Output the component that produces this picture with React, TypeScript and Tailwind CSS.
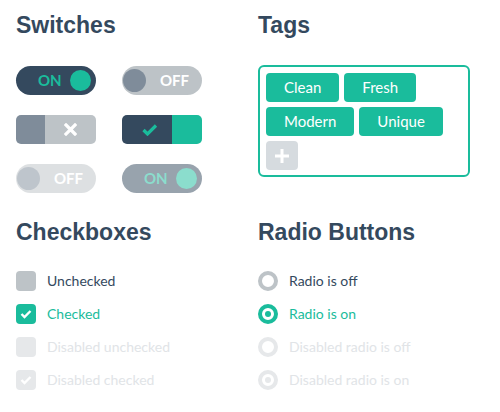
import React from 'react';

const heading = "font-['Liberation_Sans',Arial,sans-serif] font-bold text-[23px] leading-[26px] text-[#34495e]";

function SwitchOn({dim}: { dim?: boolean }) {
    return (
        <div className={`flex h-[29px] w-[80px] items-center rounded-full bg-[#34495e] pl-[22px] pr-[5px] ${dim ? 'opacity-50' : ''}`}>
            <span className="text-[15px] font-bold leading-none text-[#1abc9c]">ON</span>
            <span className="ml-auto block h-[21px] w-[21px] rounded-full bg-[#1abc9c]"/>
        </div>
    );
}

function SwitchOff({dim}: { dim?: boolean }) {
    return (
        <div className={`flex h-[29px] w-[80px] items-center gap-[14px] rounded-full bg-[#bdc3c7] pl-[1px] ${dim ? 'opacity-50' : ''}`}>
            <span className="block h-[23px] w-[23px] rounded-full bg-[#7f8c9a]"/>
            <span className="text-[15px] font-bold leading-none text-white">OFF</span>
        </div>
    );
}

function SwitchSquareOff() {
    return (
        <div className="flex h-[29px] w-[80px] overflow-hidden rounded-[5px]">
            <div className="w-[29px] bg-[#7f8c9a]"/>
            <div className="flex flex-1 items-center justify-center bg-[#bdc3c7]">
                <svg width="13" height="13" viewBox="0 0 13 13">
                    <path d="M2 2 L11 11 M11 2 L2 11" stroke="#fff" strokeWidth="3.2" strokeLinecap="square"/>
                </svg>
            </div>
        </div>
    );
}

function SwitchSquareOn() {
    return (
        <div className="flex h-[29px] w-[80px] overflow-hidden rounded-[5px]">
            <div className="flex w-[50px] items-center justify-center bg-[#34495e] pl-[6px]">
                <svg width="16" height="12" viewBox="0 0 16 12">
                    <path d="M1.5 6 L5.5 10 L14 1.5" fill="none" stroke="#1abc9c" strokeWidth="3.2"/>
                </svg>
            </div>
            <div className="flex-1 bg-[#1abc9c]"/>
        </div>
    );
}

function Check({color}: { color: string }) {
    return (
        <svg width="12" height="10" viewBox="0 0 12 10">
            <path d="M1.5 5 L4.5 8 L10.5 2" fill="none" stroke={color} strokeWidth="2.4"/>
        </svg>
    );
}

function Tag({label}: { label: string }) {
    return (
        <span className="flex h-[29px] items-center rounded-[4px] bg-[#1abc9c] px-[18px] text-[15px] leading-none text-white">
            {label}
        </span>
    );
}

export default function App() {
    const checkboxes = [
        {label: 'Unchecked', box: 'bg-[#bdc3c7]', text: 'text-[#34495e]', check: false},
        {label: 'Checked', box: 'bg-[#1abc9c]', text: 'text-[#1abc9c]', check: true},
        {label: 'Disabled unchecked', box: 'bg-[#e6e8ea]', text: 'text-[#e1e4e7]', check: false},
        {label: 'Disabled checked', box: 'bg-[#e6e8ea]', text: 'text-[#e1e4e7]', check: true},
    ];
    const radios = [
        {label: 'Radio is off', ring: 'border-[#bdc3c7]', dot: '', text: 'text-[#34495e]'},
        {label: 'Radio is on', ring: 'border-[#1abc9c]', dot: 'bg-[#1abc9c]', text: 'text-[#1abc9c]'},
        {label: 'Disabled radio is off', ring: 'border-[#e6e8ea]', dot: '', text: 'text-[#e1e4e7]'},
        {label: 'Disabled radio is on', ring: 'border-[#e6e8ea]', dot: 'bg-[#e6e8ea]', text: 'text-[#e1e4e7]'},
    ];

    return (
        <div className="h-[412px] w-[500px] bg-white pl-[16px] pt-[12px] font-['Lato',sans-serif]">
            <div className="grid grid-cols-[242px_242px]">
                <div>
                    <h3 className={heading}>Switches</h3>
                    <div className="mt-[28px] grid grid-cols-[80px_80px] gap-x-[26px] gap-y-[20px]">
                        <SwitchOn/>
                        <SwitchOff/>
                        <SwitchSquareOff/>
                        <SwitchSquareOn/>
                        <SwitchOff dim/>
                        <SwitchOn dim/>
                    </div>
                </div>
                <div>
                    <h3 className={heading}>Tags</h3>
                    <div className="mt-[27px] flex w-[212px] flex-wrap gap-[5px] rounded-[6px] border-2 border-[#1abc9c] px-[6px] pb-[5px] pt-[6px]">
                        <Tag label="Clean"/>
                        <Tag label="Fresh"/>
                        <Tag label="Modern"/>
                        <Tag label="Unique"/>
                        <span className="flex h-[29px] w-[32px] items-center justify-center rounded-[4px] bg-[#d6dbdf]">
                            <svg width="14" height="14" viewBox="0 0 14 14">
                                <path d="M7 0 V14 M0 7 H14" stroke="#fff" strokeWidth="3"/>
                            </svg>
                        </span>
                    </div>
                </div>

                <div className="mt-[26px]">
                    <h3 className={heading}>Checkboxes</h3>
                    <div className="mt-[26px] flex flex-col gap-[13px]">
                        {checkboxes.map(c => (
                            <div key={c.label} className="flex items-center gap-[11px]">
                                <span className={`flex h-[20px] w-[20px] items-center justify-center rounded-[4px] ${c.box}`}>
                                    {c.check && <Check color="#fff"/>}
                                </span>
                                <span className={`text-[14px] leading-[20px] ${c.text}`}>{c.label}</span>
                            </div>
                        ))}
                    </div>
                </div>
                <div className="mt-[26px]">
                    <h3 className={heading}>Radio Buttons</h3>
                    <div className="mt-[26px] flex flex-col gap-[13px]">
                        {radios.map(r => (
                            <div key={r.label} className="flex items-center gap-[11px]">
                                <span className={`flex h-[20px] w-[20px] items-center justify-center rounded-full border-4 bg-white ${r.ring}`}>
                                    {r.dot && <span className={`block h-[6px] w-[6px] rounded-full ${r.dot}`}/>}
                                </span>
                                <span className={`text-[14px] leading-[20px] ${r.text}`}>{r.label}</span>
                            </div>
                        ))}
                    </div>
                </div>
            </div>
        </div>
    );
}
